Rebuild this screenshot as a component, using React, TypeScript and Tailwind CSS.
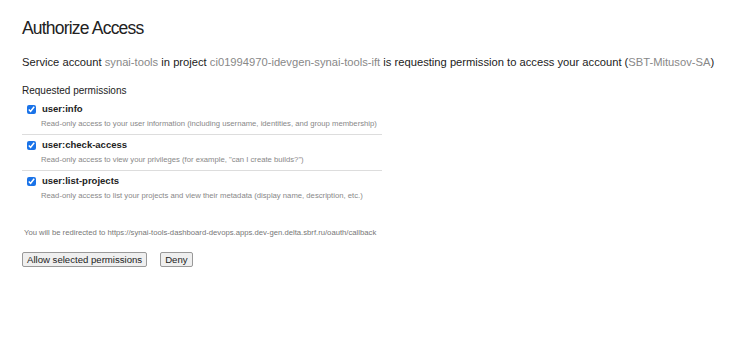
const perms = [
  {
    name: 'user:info',
    desc: 'Read-only access to your user information (including username, identities, and group membership)',
  },
  {
    name: 'user:check-access',
    desc: 'Read-only access to view your privileges (for example, "can I create builds?")',
  },
  {
    name: 'user:list-projects',
    desc: 'Read-only access to list your projects and view their metadata (display name, description, etc.)',
  },
];

export default function App() {
  return (
    <div className="min-h-screen bg-white px-[22px] pt-[16px] font-['Liberation_Sans',Arial,sans-serif] text-[#222]">
      <h1 className="text-[17.5px] leading-[24px] tracking-[-0.8px]">Authorize Access</h1>
      <p className="mt-[14px] text-[11.2px] leading-[16px] whitespace-nowrap">
        Service account <span className="text-[#888]">synai-tools</span> in project{' '}
        <span className="text-[#888]">ci01994970-idevgen-synai-tools-ift</span> is requesting permission to access
        your account (<span className="text-[#888]">SBT-Mitusov-SA</span>)
      </p>

      <div className="mt-[15px] text-[10px] leading-[12px]">Requested permissions</div>
      <div className="mt-[2px] w-[360px]">
        {perms.map((p, i) => (
          <div key={p.name} className={i < perms.length - 1 ? 'border-b border-[#ddd] pb-[4px] pt-[3px]' : 'pt-[3px]'}>
            <label className="flex items-center gap-[6px] pl-[5px]">
              <input type="checkbox" defaultChecked className="m-0 h-[9px] w-[9px] accent-[#1a73e8]" />
              <span className="text-[9.5px] font-bold leading-[14px]">{p.name}</span>
            </label>
            <div className="mt-[2px] pl-[19px] text-[7.7px] leading-[12px] text-[#888]">{p.desc}</div>
          </div>
        ))}
      </div>

      <p className="mt-[26px] pl-[2px] text-[7.7px] leading-[10px] text-[#777]">
        You will be redirected to https://synai-tools-dashboard-devops.apps.dev-gen.delta.sbrf.ru/oauth/callback
      </p>

      <div className="mt-[14px] flex gap-[13px]">
        <button className="rounded-[2px] border border-[#999] bg-[#efefef] px-[4px] text-[9.6px] leading-[13px]">
          Allow selected permissions
        </button>
        <button className="rounded-[2px] border border-[#999] bg-[#efefef] px-[4px] text-[9.6px] leading-[13px]">
          Deny
        </button>
      </div>
    </div>
  );
}
